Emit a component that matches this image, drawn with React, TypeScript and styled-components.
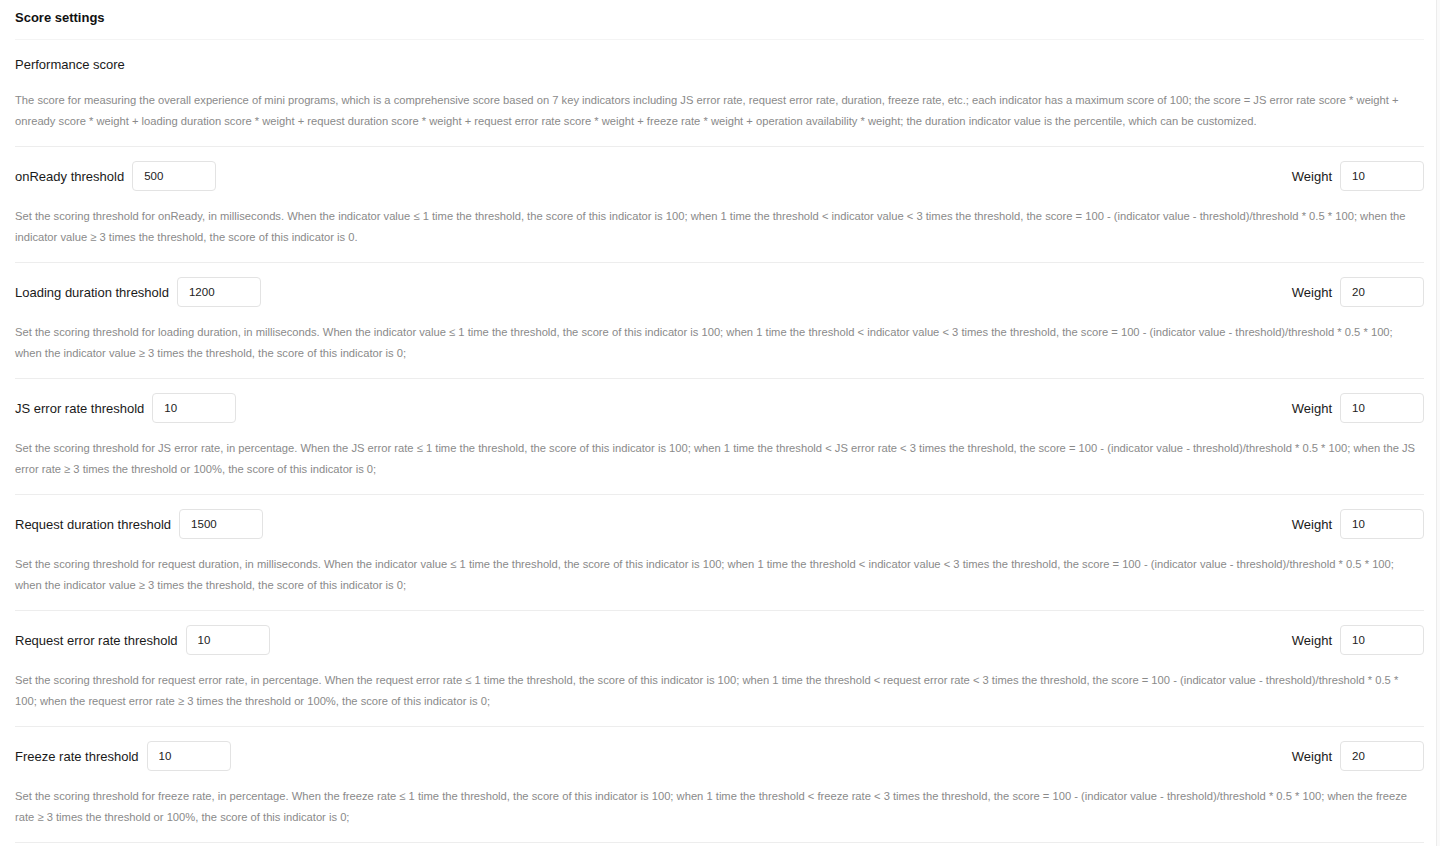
import React from "react";
import styled, { createGlobalStyle } from "styled-components";

const GlobalStyle = createGlobalStyle`
  html, body {
    margin: 0;
    padding: 0;
    background: #ffffff;
    font-family: "Liberation Sans", Arial, sans-serif;
  }
`;

interface Indicator {
  label: string;
  value: string;
  weight: string;
  description: string;
}

const indicators: Indicator[] = [
  {
    label: "onReady threshold",
    value: "500",
    weight: "10",
    description:
      "Set the scoring threshold for onReady, in milliseconds. When the indicator value ≤ 1 time the threshold, the score of this indicator is 100; when 1 time the threshold < indicator value < 3 times the threshold, the score = 100 - (indicator value - threshold)/threshold * 0.5 * 100; when the indicator value ≥ 3 times the threshold, the score of this indicator is 0.",
  },
  {
    label: "Loading duration threshold",
    value: "1200",
    weight: "20",
    description:
      "Set the scoring threshold for loading duration, in milliseconds. When the indicator value ≤ 1 time the threshold, the score of this indicator is 100; when 1 time the threshold < indicator value < 3 times the threshold, the score = 100 - (indicator value - threshold)/threshold * 0.5 * 100; when the indicator value ≥ 3 times the threshold, the score of this indicator is 0;",
  },
  {
    label: "JS error rate threshold",
    value: "10",
    weight: "10",
    description:
      "Set the scoring threshold for JS error rate, in percentage. When the JS error rate ≤ 1 time the threshold, the score of this indicator is 100; when 1 time the threshold < JS error rate < 3 times the threshold, the score = 100 - (indicator value - threshold)/threshold * 0.5 * 100; when the JS error rate ≥ 3 times the threshold or 100%, the score of this indicator is 0;",
  },
  {
    label: "Request duration threshold",
    value: "1500",
    weight: "10",
    description:
      "Set the scoring threshold for request duration, in milliseconds. When the indicator value ≤ 1 time the threshold, the score of this indicator is 100; when 1 time the threshold < indicator value < 3 times the threshold, the score = 100 - (indicator value - threshold)/threshold * 0.5 * 100; when the indicator value ≥ 3 times the threshold, the score of this indicator is 0;",
  },
  {
    label: "Request error rate threshold",
    value: "10",
    weight: "10",
    description:
      "Set the scoring threshold for request error rate, in percentage. When the request error rate ≤ 1 time the threshold, the score of this indicator is 100; when 1 time the threshold < request error rate < 3 times the threshold, the score = 100 - (indicator value - threshold)/threshold * 0.5 * 100; when the request error rate ≥ 3 times the threshold or 100%, the score of this indicator is 0;",
  },
  {
    label: "Freeze rate threshold",
    value: "10",
    weight: "20",
    description:
      "Set the scoring threshold for freeze rate, in percentage. When the freeze rate ≤ 1 time the threshold, the score of this indicator is 100; when 1 time the threshold < freeze rate < 3 times the threshold, the score = 100 - (indicator value - threshold)/threshold * 0.5 * 100; when the freeze rate ≥ 3 times the threshold or 100%, the score of this indicator is 0;",
  },
];

// page + fake scrollbar track on the right
const Page = styled.div`
  display: flex;
  min-height: 846px;
`;

const Content = styled.div`
  flex: 1;
  padding: 0 12px 0 15px;
`;

const ScrollTrack = styled.div`
  width: 3px;
  border-left: 1px solid #ececec;
  background: #fafafa;
`;

const Header = styled.div`
  height: 39px;
  display: flex;
  align-items: center;
  border-bottom: 1px solid #f4f4f4;
`;

const Title = styled.h1`
  margin: 0;
  font-size: 13px;
  font-weight: 700;
  color: #111;
  position: relative;
  top: -2px;
`;

const Section = styled.div`
  border-bottom: 1px solid #ededed;
  padding: 14px 0 14px;
`;

const IntroSection = styled(Section)`
  padding: 15px 0 14px;
`;

const SubTitle = styled.h2`
  margin: 0;
  font-size: 13px;
  font-weight: 400;
  color: #1a1a1a;
  line-height: 20px;
`;

const Row = styled.div`
  display: flex;
  align-items: center;
  justify-content: space-between;
  height: 30px;
`;

const Field = styled.div`
  display: flex;
  align-items: center;
  gap: 8px;
`;

const Label = styled.span`
  font-size: 13px;
  color: #1a1a1a;
`;

const NumberInput = styled.input`
  box-sizing: border-box;
  width: 84px;
  height: 30px;
  border: 1px solid #e3e3e3;
  border-radius: 4px;
  padding: 0 11px;
  font-family: "Liberation Sans", Arial, sans-serif;
  font-size: 11.5px;
  color: #222;
  background: #fff;
  outline: none;
`;

const Description = styled.p<{ $top: number }>`
  margin: ${(p) => p.$top}px 0 0;
  font-size: 11.2px;
  line-height: 21px;
  color: #8a8a8a;
  padding-right: 8px;
`;

const introText =
  "The score for measuring the overall experience of mini programs, which is a comprehensive score based on 7 key indicators including JS error rate, request error rate, duration, freeze rate, etc.; each indicator has a maximum score of 100; the score = JS error rate score * weight + onready score * weight + loading duration score * weight + request duration score * weight + request error rate score * weight + freeze rate * weight + operation availability * weight; the duration indicator value is the percentile, which can be customized.";

const App: React.FC = () => {
  return (
    <>
      <GlobalStyle />
      <Page>
        <Content>
          <Header>
            <Title>Score settings</Title>
          </Header>
          <IntroSection>
            <SubTitle>Performance score</SubTitle>
            <Description $top={15}>{introText}</Description>
          </IntroSection>
          {indicators.map((item) => (
            <Section key={item.label}>
              <Row>
                <Field>
                  <Label>{item.label}</Label>
                  <NumberInput defaultValue={item.value} />
                </Field>
                <Field>
                  <Label>Weight</Label>
                  <NumberInput defaultValue={item.weight} />
                </Field>
              </Row>
              <Description $top={15}>{item.description}</Description>
            </Section>
          ))}
        </Content>
        <ScrollTrack />
      </Page>
    </>
  );
};

export default App;
